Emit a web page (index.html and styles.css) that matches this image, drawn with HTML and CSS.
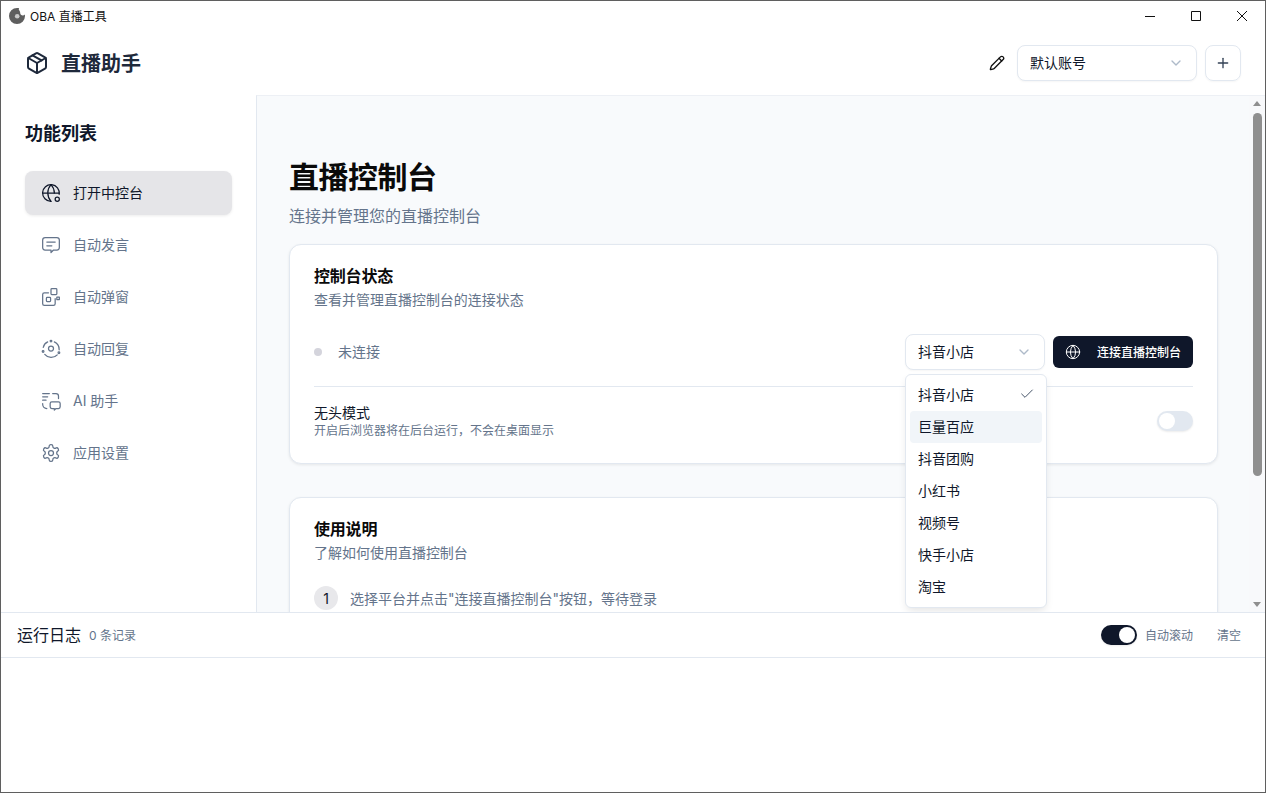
FILE: index.html
```html
<!DOCTYPE html>
<html lang="zh-CN">
<head>
<meta charset="utf-8">
<title>OBA 直播工具</title>
<link rel="stylesheet" href="styles.css">
</head>
<body>
<div class="window">
  <div class="titlebar">
    <div class="app-name">
      <svg class="app-logo" viewBox="0 0 16 16"><path d="M8 0a8 8 0 1 0 8 8c0-.6-.1-1-.2-1.400-.5.5-1.200.9-2 .9-1.400 0-2.600-1.100-2.600-2.500 0-1.300-.4-2-1.200-3C9.500 1.500 10 .6 10.200.3 9.500.1 8.800 0 8 0z" class="logo-ring"/><circle cx="8.200" cy="8.200" r="2.300" class="logo-eye"/></svg>
      <span>OBA 直播工具</span>
    </div>
    <div class="win-buttons">
      <svg class="win-btn" viewBox="0 0 46 29"><path d="M18 15.500h10"/></svg>
      <svg class="win-btn" viewBox="0 0 46 29"><rect x="18.500" y="10.500" width="9" height="9"/></svg>
      <svg class="win-btn" viewBox="0 0 46 29"><path d="M18 10l10 10M28 10L18 20"/></svg>
    </div>
  </div>
  <header class="header">
    <div class="brand">
      <svg class="brand-icon" viewBox="0 0 24 24"><path d="M21 8a2 2 0 0 0-1-1.730l-7-4a2 2 0 0 0-2 0l-7 4A2 2 0 0 0 3 8v8a2 2 0 0 0 1 1.730l7 4a2 2 0 0 0 2 0l7-4A2 2 0 0 0 21 16Z"/><path d="m3.300 7 8.700 5 8.700-5"/><path d="M12 22V12"/><path d="m7.500 4.270 9 5.150"/></svg>
      <span class="brand-name">直播助手</span>
    </div>
    <div class="account">
      <svg class="pencil" viewBox="0 0 24 24"><path d="M21.174 6.812a1 1 0 0 0-3.986-3.987L3.842 16.174a2 2 0 0 0-.5.83l-1.321 4.352a.5.5 0 0 0 .623.622l4.353-1.320a2 2 0 0 0 .83-.497z"/><path d="m15 5 4 4"/></svg>
      <div class="select account-select"><span>默认账号</span><svg class="chevron" viewBox="0 0 24 24"><path d="m6 9 6 6 6-6"/></svg></div>
      <div class="add-btn"><svg viewBox="0 0 24 24"><path d="M5 12h14"/><path d="M12 5v14"/></svg></div>
    </div>
  </header>
  <div class="body">
    <aside class="sidebar">
      <h2 class="side-title">功能列表</h2>
      <nav class="nav">
        <a class="nav-item active">
          <svg viewBox="0 0 24 24"><path d="M21.800 13.500A10 10 0 1 0 12 22"/><path d="M2 12h20"/><path d="M12 2a15 15 0 0 0 0 20"/><path d="M12 2a15 15 0 0 1 4 10"/><circle cx="19.500" cy="19.500" r="2.500"/></svg>
          <span>打开中控台</span>
        </a>
        <a class="nav-item">
          <svg viewBox="0 0 24 24"><path d="M5 3h14a3 3 0 0 1 3 3v9a3 3 0 0 1-3 3h-4l-3 3v-3H5a3 3 0 0 1-3-3V6a3 3 0 0 1 3-3z"/><path d="M7 8.500h10"/><path d="M7 13h6"/></svg>
          <span>自动发言</span>
        </a>
        <a class="nav-item">
          <svg viewBox="0 0 24 24"><rect x="12" y="2" width="7" height="7" rx="1"/><path d="M9 7H4a2 2 0 0 0-2 2v11a2 2 0 0 0 2 2h11a2 2 0 0 0 2-2v-6"/><rect x="6.500" y="12.500" width="5" height="5" rx="1"/><rect x="19" y="12" width="3" height="3"/></svg>
          <span>自动弹窗</span>
        </a>
        <a class="nav-item">
          <svg viewBox="0 0 24 24"><path d="M8 3.500A9.500 9.500 0 0 0 2.700 10"/><path d="M4.500 18.500A10 10 0 0 0 19.500 19"/><path d="M21.800 13A10 10 0 0 0 16 3.500"/><circle cx="12" cy="2.500" r="1"/><circle cx="2.500" cy="15" r="1"/><circle cx="21.500" cy="16.500" r="1"/><circle cx="12" cy="11.500" r="3"/></svg>
          <span>自动回复</span>
        </a>
        <a class="nav-item">
          <svg viewBox="0 0 24 24"><path d="M2 3h8"/><path d="M2 7h6"/><path d="M2 11h4"/><path d="M14 3h4a3 3 0 0 1 3 3v3"/><path d="M2 15v1a5 5 0 0 0 5 5"/><path d="M13 13h8a2 2 0 0 1 2 2v4a2 2 0 0 1-2 2h-3l-2 2v-2h-3a2 2 0 0 1-2-2v-4a2 2 0 0 1 2-2z"/></svg>
          <span>AI 助手</span>
        </a>
        <a class="nav-item">
          <svg viewBox="0 0 24 24"><path d="M12.220 2h-.44a2 2 0 0 0-2 2v.18a2 2 0 0 1-1 1.730l-.43.25a2 2 0 0 1-2 0l-.15-.08a2 2 0 0 0-2.730.73l-.22.38a2 2 0 0 0 .73 2.730l.15.1a2 2 0 0 1 1 1.720v.51a2 2 0 0 1-1 1.740l-.15.09a2 2 0 0 0-.73 2.730l.22.38a2 2 0 0 0 2.730.73l.15-.08a2 2 0 0 1 2 0l.43.25a2 2 0 0 1 1 1.730V20a2 2 0 0 0 2 2h.44a2 2 0 0 0 2-2v-.18a2 2 0 0 1 1-1.730l.43-.25a2 2 0 0 1 2 0l.15.08a2 2 0 0 0 2.730-.73l.22-.39a2 2 0 0 0-.73-2.730l-.15-.08a2 2 0 0 1-1-1.740v-.5a2 2 0 0 1 1-1.740l.15-.09a2 2 0 0 0 .73-2.730l-.22-.38a2 2 0 0 0-2.730-.73l-.15.08a2 2 0 0 1-2 0l-.43-.25a2 2 0 0 1-1-1.730V4a2 2 0 0 0-2-2z"/><circle cx="12" cy="12" r="3"/></svg>
          <span>应用设置</span>
        </a>
      </nav>
    </aside>
    <div class="main-wrap">
      <main class="main">
        <h1 class="page-title">直播控制台</h1>
        <p class="page-sub">连接并管理您的直播控制台</p>
        <section class="card status-card">
          <h3 class="card-title">控制台状态</h3>
          <p class="card-desc">查看并管理直播控制台的连接状态</p>
          <div class="status-row">
            <div class="status"><i class="dot"></i><span>未连接</span></div>
            <div class="controls">
              <div class="select platform-select"><span>抖音小店</span><svg class="chevron" viewBox="0 0 24 24"><path d="m6 9 6 6 6-6"/></svg></div>
              <button class="connect-btn"><svg viewBox="0 0 24 24"><circle cx="12" cy="12" r="10"/><path d="M12 2a14.500 14.500 0 0 0 0 20 14.500 14.500 0 0 0 0-20"/><path d="M2 12h20"/></svg><span>连接直播控制台</span></button>
            </div>
            <ul class="menu">
              <li class="menu-item">抖音小店<svg class="check" viewBox="0 0 24 24"><path d="M20 6 9 17l-5-5"/></svg></li>
              <li class="menu-item hover">巨量百应</li>
              <li class="menu-item">抖音团购</li>
              <li class="menu-item">小红书</li>
              <li class="menu-item">视频号</li>
              <li class="menu-item">快手小店</li>
              <li class="menu-item">淘宝</li>
            </ul>
          </div>
          <div class="headless-row">
            <div>
              <div class="headless-title">无头模式</div>
              <div class="headless-desc">开启后浏览器将在后台运行，不会在桌面显示</div>
            </div>
            <div class="switch"><i class="knob"></i></div>
          </div>
        </section>
        <section class="card guide-card">
          <h3 class="card-title">使用说明</h3>
          <p class="card-desc">了解如何使用直播控制台</p>
          <div class="step"><b class="step-no">1</b><span>选择平台并点击"连接直播控制台"按钮，等待登录</span></div>
        </section>
      </main>
      <div class="scrollbar">
        <i class="arrow up"></i>
        <div class="track"><i class="thumb"></i></div>
        <i class="arrow down"></i>
      </div>
    </div>
  </div>
  <footer class="log">
    <div class="log-head">
      <div class="log-info"><span class="log-title">运行日志</span><span class="log-count">0 条记录</span></div>
      <div class="log-actions">
        <div class="switch on"><i class="knob"></i></div>
        <span class="log-label">自动滚动</span>
        <span class="log-clear">清空</span>
      </div>
    </div>
    <div class="log-body"></div>
  </footer>
</div>
</body>
</html>
```
FILE: styles.css
```css
* { box-sizing: border-box; }
html, body { margin: 0; height: 100%; overflow: hidden; }
body { font-family: Inter, "Noto Sans CJK SC", sans-serif; color: #0f172a; background: #fff; }
h1, h2, h3, p, ul { margin: 0; padding: 0; }
svg { fill: none; stroke: currentColor; stroke-width: 2; stroke-linecap: round; stroke-linejoin: round; flex: none; }

.window { width: 1266px; height: 793px; border: 1px solid #5f5f5f; display: flex; flex-direction: column; background: #fff; }

.titlebar { height: 29px; display: flex; justify-content: space-between; align-items: center; flex: none; }
.app-name { display: flex; align-items: center; gap: 5px; padding-left: 8px; font-size: 12px; color: #111; }
.app-logo { width: 16px; height: 16px; stroke: none; }
.logo-ring { fill: #5e5e5e; }
.logo-eye { fill: #c9c9c9; }
.win-buttons { display: flex; color: #111; }
.win-btn { width: 46px; height: 29px; stroke-width: 1; stroke-linecap: butt; }

.header { height: 65px; flex: none; display: flex; justify-content: space-between; align-items: center; padding: 15px 24px 14px; }
.brand { display: flex; align-items: center; gap: 12px; padding-bottom: 1px; }
.brand-icon { width: 24px; height: 24px; color: #1e293b; }
.brand-name { font-size: 20px; font-weight: 700; color: #1e293b; padding-bottom: 1px; }
.account { display: flex; align-items: center; }
.pencil { width: 16px; height: 16px; color: #111; margin-right: 12px; }
.select { display: flex; align-items: center; justify-content: space-between; background: #fff; border: 1px solid #e2e8f0; border-radius: 8px; font-size: 14px; padding: 0 12px; color: #0f172a; box-shadow: 0 1px 2px rgba(0,0,0,.04); }
.select span { padding-bottom: 2px; }
.account-select { width: 180px; height: 36px; }
.chevron { width: 16px; height: 16px; color: #94a3b8; opacity: .75; }
.add-btn { width: 36px; height: 36px; margin-left: 8px; border: 1px solid #e2e8f0; border-radius: 8px; display: flex; align-items: center; justify-content: center; box-shadow: 0 1px 2px rgba(0,0,0,.04); }
.add-btn svg { width: 16px; height: 16px; color: #334155; }

.body { flex: 1; min-height: 0; display: flex; border-bottom: 1px solid #e2e8f0; }
.sidebar { width: 255px; flex: none; padding: 25px 24px 0; background: #fff; }
.side-title { font-size: 18px; font-weight: 700; line-height: 28px; color: #0f172a; margin-bottom: 23px; }
.nav { display: flex; flex-direction: column; gap: 8px; width: 207px; }
.nav-item { height: 44px; display: flex; align-items: center; gap: 12px; padding: 0 16px; border-radius: 8px; font-size: 14px; color: #64748b; }
.nav-item span { padding-bottom: 2px; }
.nav-item svg { width: 20px; height: 20px; stroke-width: 1.500; }
.nav-item.active { background: #e5e5e8; color: #0f172a; box-shadow: 0 1px 3px rgba(0,0,0,.08); }

.main-wrap { flex: 1; min-width: 0; display: flex; background: #f8fafc; border-left: 1px solid #e2e8f0; border-top: 1px solid #edf0f5; }
.main { flex: 1; min-width: 0; overflow: hidden; padding: 63px 31px 0 32px; }
.page-title { font-size: 30px; font-weight: 700; line-height: 36px; color: #0a0a0a; letter-spacing: -.5px; }
.page-sub { font-size: 16px; line-height: 24px; color: #64748b; margin-top: 9px; }
.card { background: #fff; border: 1px solid #e2e8f0; border-radius: 12px; padding: 23px 24px 24px; box-shadow: 0 1px 3px rgba(0,0,0,.08); }
.status-card { margin-top: 16px; height: 220px; }
.guide-card { margin-top: 33px; height: 300px; }
.card-title { font-size: 16px; font-weight: 700; line-height: 16px; color: #0a0a0a; letter-spacing: -.2px; }
.card-desc { font-size: 13.990px; line-height: 20px; color: #64748b; margin-top: 6px; }

.status-row { position: relative; display: flex; justify-content: space-between; align-items: center; margin-top: 23px; height: 37px; }
.status { display: flex; align-items: center; gap: 16px; font-size: 14px; color: #64748b; }
.status span { padding-bottom: 1px; }
.dot { width: 8px; height: 8px; border-radius: 50%; background: #d4d4dc; }
.controls { display: flex; align-items: center; gap: 8px; }
.platform-select { width: 140px; height: 36px; }
.connect-btn { width: 140px; height: 32px; border: 0; border-radius: 6px; background: #0f172a; color: #fff; font: 500 12px Inter, "Noto Sans CJK SC", sans-serif; display: flex; align-items: center; padding: 0 12px; gap: 16px; }
.connect-btn svg { width: 16px; height: 16px; stroke-width: 1.500; }

.menu { position: absolute; left: 591px; top: 41px; width: 142px; height: 234px; list-style: none; padding: 4px; background: #fff; border: 1px solid #e2e8f0; border-radius: 6px; box-shadow: 0 4px 8px -2px rgba(0,0,0,.12); z-index: 5; }
.menu-item { height: 32px; display: flex; align-items: center; justify-content: space-between; padding: 0 8px 3px; font-size: 14px; border-radius: 4px; color: #0f172a; }
.menu-item.hover { background: #f1f5f9; }
.check { width: 16px; height: 16px; color: #475569; stroke-width: 1.500; margin-right: -1px; }

.headless-row { display: flex; justify-content: space-between; align-items: center; border-top: 1px solid #e2e8f0; margin-top: 16px; padding-top: 16px; }
.headless-title { font-size: 14px; line-height: 19px; color: #0f172a; }
.headless-desc { font-size: 12px; line-height: 16px; color: #64748b; margin-top: 1px; }
.switch { width: 36px; height: 20px; border-radius: 10px; background: #e2e8f0; padding: 2px; box-shadow: 0 1px 2px rgba(0,0,0,.08); display: flex; }
.knob { width: 16px; height: 16px; border-radius: 50%; background: #fff; }
.switch.on { background: #0f172a; justify-content: flex-end; }

.step { display: flex; align-items: center; gap: 12px; margin-top: 23px; font-size: 14px; color: #64748b; }
.step-no { width: 24px; height: 24px; border-radius: 50%; background: #e8e8eb; color: #0f172a; font-weight: 400; display: flex; align-items: center; justify-content: center; }

.scrollbar { width: 16px; flex: none; display: flex; flex-direction: column; align-items: center; background: #f8f9fb; }
.arrow { width: 0; height: 0; border-left: 4.500px solid transparent; border-right: 4.500px solid transparent; flex: none; }
.arrow.up { border-bottom: 5px solid #8f8f8f; margin-top: 5px; }
.arrow.down { border-top: 5px solid #8f8f8f; margin: 0 0 5px; }
.track { flex: 1; width: 100%; display: flex; justify-content: center; padding-top: 7px; }
.thumb { width: 9px; height: 363px; border-radius: 5px; background: #8f8f8f; }

.log { height: 179px; flex: none; display: flex; flex-direction: column; }
.log-head { height: 45px; flex: none; display: flex; justify-content: space-between; align-items: center; padding: 0 24px 0 16px; border-bottom: 1px solid #e2e8f0; }
.log-info { display: flex; align-items: center; gap: 8px; }
.log-title { font-size: 16px; color: #0f172a; padding-bottom: 2px; }
.log-count { font-size: 12px; color: #64748b; padding-bottom: 2px; }
.log-actions { display: flex; align-items: center; font-size: 12px; color: #64748b; }
.log-label { margin-left: 8px; padding-bottom: 2px; }
.log-clear { margin-left: 24px; padding-bottom: 2px; }
.log-body { flex: 1; }
```
